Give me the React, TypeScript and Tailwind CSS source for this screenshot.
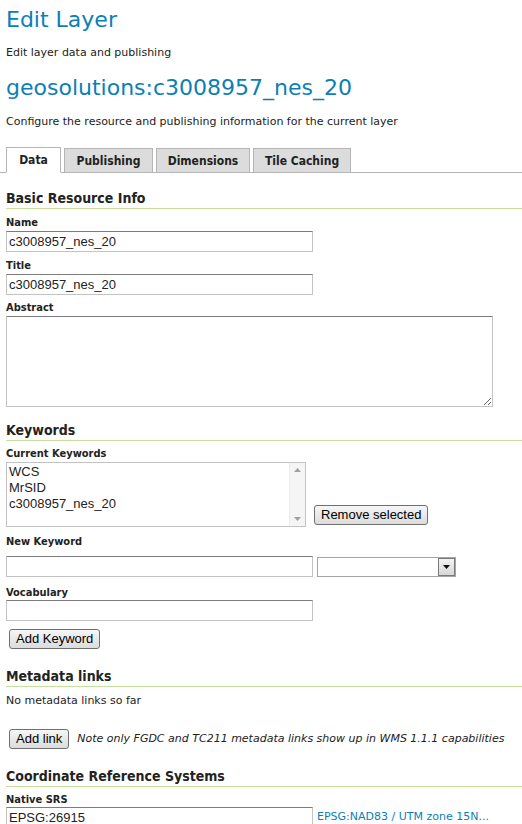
const Label = ({ children }: { children: React.ReactNode }) => (
  <div className="text-[11px] font-bold text-[#222] leading-[14px] [font-family:'DejaVu_Sans_Condensed','DejaVu_Sans',sans-serif]">{children}</div>
)

const Section = ({ children }: { children: React.ReactNode }) => (
  <h3 className="-mr-[6px] text-[14px] font-bold text-[#222] leading-[18px] border-b border-[#c5df9c] pb-[1px] [font-family:'DejaVu_Sans_Condensed','DejaVu_Sans',sans-serif]">{children}</h3>
)

const Btn = ({ children, className = '' }: { children: React.ReactNode; className?: string }) => (
  <button className={`h-[20px] px-[6px] text-[13px] leading-[16px] text-black border border-[#707070] rounded-[3px] bg-gradient-to-b from-[#f6f6f6] to-[#dcdcdc] [font-family:'Liberation_Sans',Arial,sans-serif] ${className}`}>
    {children}
  </button>
)

const inputCls =
  'h-[21px] border border-[#c3c3c3] border-t-[#7c7c7c] px-[2px] text-[13px] text-[#222] bg-white [font-family:"Liberation_Sans",Arial,sans-serif] outline-none'

export default function App() {
  return (
    <div className="min-h-screen bg-white px-[6px] pt-[4px] text-[12px] text-[#222] [font-family:'DejaVu_Sans',Verdana,sans-serif]">
      <h1 className="text-[22px] leading-[32px] text-[#0b7fb5]">Edit Layer</h1>
      <p className="mt-[10px] text-[11px] leading-[14px]">Edit layer data and publishing</p>
      <h2 className="mt-[12px] text-[22px] leading-[32px] text-[#0b7fb5]">geosolutions:c3008957_nes_20</h2>
      <p className="mt-[11px] text-[11px] leading-[14px]">Configure the resource and publishing information for the current layer</p>

      <div className="mt-[18px] -mx-[6px] pl-[6px] flex items-end gap-[3px] border-b border-[#b5b5b5] h-[26px] [font-family:'DejaVu_Sans_Condensed','DejaVu_Sans',sans-serif]">
        <div className="w-[55px] h-[26px] -mb-px bg-white border border-[#b5b5b5] border-b-white flex items-center justify-center text-[12px] font-bold">Data</div>
        <div className="w-[89px] h-[24px] bg-[#dcdcdc] border border-[#b5b5b5] border-b-0 flex items-center justify-center text-[12px] font-bold">Publishing</div>
        <div className="w-[94px] h-[24px] bg-[#dcdcdc] border border-[#b5b5b5] border-b-0 flex items-center justify-center text-[12px] font-bold">Dimensions</div>
        <div className="w-[98px] h-[24px] bg-[#dcdcdc] border border-[#b5b5b5] border-b-0 flex items-center justify-center text-[12px] font-bold">Tile Caching</div>
      </div>

      <div className="mt-[16px]">
        <Section>Basic Resource Info</Section>
        <div className="mt-[7px]"><Label>Name</Label></div>
        <input className={`${inputCls} w-[307px] mt-[1px] block`} defaultValue="c3008957_nes_20" />
        <div className="mt-[7px]"><Label>Title</Label></div>
        <input className={`${inputCls} w-[307px] mt-[1px] block`} defaultValue="c3008957_nes_20" />
        <div className="mt-[6px]"><Label>Abstract</Label></div>
        <textarea className="mt-[1px] block w-[487px] h-[91px] border border-[#c3c3c3] border-t-[#7c7c7c] bg-white outline-none" />
      </div>

      <div className="mt-[14px]">
        <Section>Keywords</Section>
        <div className="mt-[6px]"><Label>Current Keywords</Label></div>
        <div className="mt-[1px] flex items-end gap-[8px]">
          <div className="w-[300px] h-[65px] border border-[#c3c3c3] bg-white flex text-[13px] leading-[16px] text-[#222] [font-family:'Liberation_Sans',Arial,sans-serif]">
            <div className="flex-1 pl-[2px] pt-[1px]">
              <div>WCS</div>
              <div>MrSID</div>
              <div>c3008957_nes_20</div>
            </div>
            <div className="w-[16px] bg-[#f5f5f5] border-l border-[#ececec] flex flex-col items-center justify-between py-[5px]">
              <svg width="7" height="4" viewBox="0 0 7 4"><path d="M3.5 0L7 4H0z" fill="#a0a0a0" /></svg>
              <svg width="7" height="4" viewBox="0 0 7 4"><path d="M0 0h7L3.5 4z" fill="#a0a0a0" /></svg>
            </div>
          </div>
          <Btn className="mb-[2px]">Remove selected</Btn>
        </div>
        <div className="mt-[8px]"><Label>New Keyword</Label></div>
        <div className="mt-[7px] flex items-center gap-[4px]">
          <input className={`${inputCls} w-[307px]`} />
          <div className="w-[139px] h-[20px] border border-[#a5a5a5] bg-white flex justify-end">
            <div className="w-[17px] h-[18px] border border-[#7a7a7a] bg-gradient-to-b from-[#f3f3f3] to-[#d8d8d8] flex items-center justify-center">
              <svg width="7" height="4" viewBox="0 0 7 4"><path d="M0 0h7L3.5 4z" fill="#111" /></svg>
            </div>
          </div>
        </div>
        <div className="mt-[9px]"><Label>Vocabulary</Label></div>
        <input className={`${inputCls} w-[307px] mt-[0px] block`} />
        <Btn className="mt-[8px] ml-[3px]">Add Keyword</Btn>
      </div>

      <div className="mt-[18px]">
        <Section>Metadata links</Section>
        <p className="mt-[7px] text-[11px] leading-[14px]">No metadata links so far</p>
        <div className="mt-[21px] flex items-center gap-[8px]">
          <Btn className="ml-[3px]">Add link</Btn>
          <span className="italic text-[11px]">Note only FGDC and TC211 metadata links show up in WMS 1.1.1 capabilities</span>
        </div>
      </div>

      <div className="mt-[18px]">
        <Section>Coordinate Reference Systems</Section>
        <div className="mt-[6px]"><Label>Native SRS</Label></div>
        <div className="mt-[0px] flex items-center gap-[4px]">
          <input className={`${inputCls} w-[307px]`} defaultValue="EPSG:26915" />
          <a className="text-[11px] text-[#0b7fb5]">EPSG:NAD83 / UTM zone 15N...</a>
        </div>
      </div>
    </div>
  )
}
